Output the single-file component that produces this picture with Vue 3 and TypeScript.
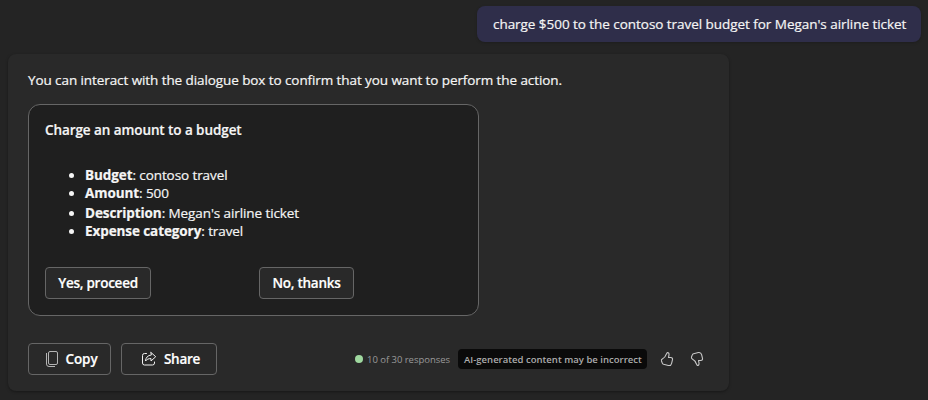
<script setup lang="ts">
interface Field {
  label: string
  value: string
}

const prompt: string = "charge $500 to the contoso travel budget for Megan's airline ticket"

const fields: Field[] = [
  { label: 'Budget', value: 'contoso travel' },
  { label: 'Amount', value: '500' },
  { label: 'Description', value: "Megan's airline ticket" },
  { label: 'Expense category', value: 'travel' },
]
</script>

<template>
  <main class="chat">
    <div class="user-row">
      <div class="bubble"><span class="prompt">{{ prompt }}</span></div>
    </div>

    <section class="reply">
      <p class="intro">You can interact with the dialogue box to confirm that you want to perform the action.</p>

      <article class="card">
        <h2 class="title">Charge an amount to a budget</h2>
        <ul class="fields">
          <li v-for="f in fields" :key="f.label"><b>{{ f.label }}</b>: <span>{{ f.value }}</span></li>
        </ul>
        <div class="choices">
          <button class="btn yes" type="button"><span>Yes, proceed</span></button>
          <button class="btn no" type="button"><span>No, thanks</span></button>
        </div>
      </article>

      <footer class="footer">
        <button class="btn copy" type="button">
          <svg width="14" height="18" viewBox="0 0 14 18" fill="none" stroke="#b4b4b4">
            <rect x="3.5" y="1.5" width="9" height="13" rx="1.5" />
            <path d="M1.5 3v11a2.5 2.5 0 0 0 2.5 2.5h6" />
          </svg>
          <span>Copy</span>
        </button>
        <button class="btn share" type="button">
          <svg width="16" height="16" viewBox="0 0 16 16" fill="none" stroke="#f2f2f2" stroke-linejoin="round" stroke-linecap="round">
            <path d="M5.500 2.500H3.500a2 2 0 0 0-2 2v7.500a2 2 0 0 0 2 2h8a2 2 0 0 0 2-2v-1" />
            <path d="M10 1.500l4.700 4.200L10 10V7.600C7.600 7.500 5.800 8.300 4.500 10c.2-3.300 2.200-5.700 5.500-6z" />
          </svg>
          <span>Share</span>
        </button>
        <div class="status">
          <i class="dot"></i>
          <span class="count">10 of 30 responses</span>
          <span class="notice"><span>AI-generated content may be incorrect</span></span>
          <svg class="up" width="14" height="16" viewBox="0 0 14 16" fill="none" stroke="#c8c8c8" stroke-width="1.100" stroke-linejoin="round">
            <path d="M7.300 1.500c1.300-.1 1.900 1 1.700 2.300L8.500 6.500h2.300c1.300 0 2 .9 1.700 2.100l-.9 3.700c-.4 1.700-1.500 2.500-3.200 2.200L3.600 13.300c-.7-.2-1.100-.6-1.300-1.200L1.500 10c-.3-.9 0-1.500.8-1.900C4.500 7 5.500 5.700 6.300 3.200z" />
          </svg>
          <svg class="down" width="14" height="16" viewBox="0 0 14 16" fill="none" stroke="#c8c8c8" stroke-width="1.100" stroke-linejoin="round">
            <path d="M7.300 14.500c1.300.1 1.900-1 1.700-2.300L8.500 9.500h2.300c1.300 0 2-.9 1.700-2.100l-.9-3.700c-.4-1.700-1.500-2.500-3.200-2.200L3.600 2.700c-.7.2-1.100.6-1.300 1.200L1.500 6c-.3.900 0 1.500.8 1.900 2.200 1.100 3.200 2.400 4 4.900z" />
          </svg>
        </div>
      </footer>
    </section>
  </main>
</template>

<style>
body {
  background: #242424;
}
</style>

<style scoped>
.chat {
  box-sizing: border-box;
  height: 400px;
  padding: 6px 7px 0 8px;
  overflow: hidden;
  background: #242424;
  color: #f5f5f5;
  font: 400 13.500px/20px "Open Sans", "Noto Sans", sans-serif;
  -webkit-text-stroke: 0.2px;
  white-space: nowrap;
}
.user-row {
  display: flex;
  justify-content: flex-end;
}
.bubble {
  box-sizing: border-box;
  width: 444px;
  height: 36px;
  padding: 8px 16px;
  border-radius: 8px;
  background: #2f2e4a;
  box-shadow: 0 1px 3px rgba(0, 0, 0, 0.2);
}
.prompt {
  letter-spacing: -0.045px;
}
.reply {
  box-sizing: border-box;
  width: 721px;
  height: 337px;
  margin-top: 12px;
  padding: 16px 20px;
  border-radius: 8px;
  background: #292929;
  box-shadow: 0 1px 3px rgba(0, 0, 0, 0.35);
}
.intro {
  margin: 0;
  letter-spacing: -0.085px;
}
.card {
  box-sizing: border-box;
  width: 451px;
  height: 212px;
  margin-top: 14px;
  padding: 15px 16px;
  border: 1px solid #666;
  border-radius: 12px;
  background: #1f1f1f;
}
.title {
  margin: 0;
  font-size: 13.500px;
  font-weight: 600;
  letter-spacing: -0.08px;
}
.fields {
  margin: 26px 0 0;
  padding: 0 0 0 40px;
  letter-spacing: -0.09px;
}
.fields li {
  height: 18px;
  line-height: 19px;
}
.fields li:nth-child(2) {
  margin-bottom: 2px;
}
.fields b {
  font-weight: 700;
}
.choices {
  display: flex;
  gap: 108px;
  margin-top: 27px;
}
.btn {
  display: flex;
  box-sizing: border-box;
  height: 32px;
  align-items: center;
  justify-content: center;
  padding: 0;
  border: 1px solid #666;
  border-radius: 4px;
  background: #292929;
  color: #fff;
  font: 600 13.500px/20px "Open Sans", "Noto Sans", sans-serif;
  letter-spacing: -0.25px;
}
.yes {
  width: 106px;
}
.no {
  width: 95px;
}
.footer {
  display: flex;
  align-items: center;
  margin-top: 27px;
}
.copy {
  width: 83px;
  gap: 6px;
  padding-left: 4px;
  letter-spacing: -0.05px;
}
.share {
  width: 96px;
  gap: 7px;
  margin-left: 10px;
  padding-left: 3px;
}
.status {
  display: flex;
  align-items: center;
  margin-left: 138px;
  -webkit-text-stroke: 0;
}
.dot {
  width: 8px;
  height: 8px;
  border-radius: 50%;
  background: #9fd89f;
}
.count {
  width: 83px;
  margin-left: 4px;
  padding-top: 1px;
  color: #999;
  font-size: 9.500px;
  letter-spacing: -0.03px;
}
.notice {
  box-sizing: border-box;
  width: 189px;
  height: 20px;
  margin-left: 8px;
  padding-left: 6px;
  border-radius: 4px;
  background: #0a0a0a;
  color: #adadad;
  font-size: 9.500px;
  font-weight: 600;
  line-height: 21px;
  letter-spacing: 0.02px;
}
.up {
  margin-left: 13px;
}
.down {
  margin-left: 16px;
}
</style>
